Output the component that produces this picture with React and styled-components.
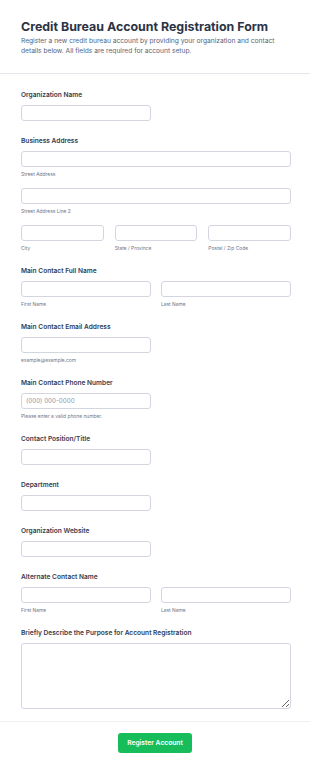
import React from 'react';
import styled, { createGlobalStyle } from 'styled-components';

const GlobalStyle = createGlobalStyle`
  * { box-sizing: border-box; }
  body {
    margin: 0;
    background: #ffffff;
    font-family: Inter, "Noto Sans", "Liberation Sans", sans-serif;
    color: #2c3345;
  }
`;

const Page = styled.div`
  width: 310px;
  background: #fff;
`;

const Header = styled.header`
  padding: 19px 19px 17px 21px;
  border-bottom: 1px solid #e6e7ec;
`;

const Title = styled.h1`
  margin: 0;
  font-size: 12.4px;
  line-height: 16px;
  font-weight: 700;
  color: #2c3345;
  white-space: nowrap;
`;

const Description = styled.p`
  margin: 1px 0 0;
  font-size: 6.65px;
  line-height: 10px;
  color: #57647e;
`;

const Form = styled.form`
  padding: 16px 19px 12px 21px;
  display: flex;
  flex-direction: column;
  gap: 14px;
`;

const Field = styled.div`
  display: flex;
  flex-direction: column;
`;

const Label = styled.label`
  font-size: 6.6px;
  line-height: 10px;
  font-weight: 600;
  color: #343c52;
  margin-bottom: 5px;
`;

const Row = styled.div`
  display: grid;
  grid-template-columns: repeat(${p => p.$cols || 1}, 1fr);
  column-gap: ${p => (p.$cols === 3 ? 11 : 10)}px;
  & + & { margin-top: 10px; }
`;

const Sub = styled.div`
  display: flex;
  flex-direction: column;
  width: ${p => p.$half ? '130px' : 'auto'};
  padding-bottom: ${p => p.$bare ? 1 : 0}px;
`;

const Input = styled.input`
  height: 16px;
  width: 100%;
  border: 1px solid #d3d6e0;
  border-radius: 3px;
  background: #fff;
  padding: 0 4px;
  font-family: inherit;
  font-size: 6.25px;
  color: #2c3345;
  outline: none;
  &::placeholder { color: #8d93a6; }
`;

const TextArea = styled.textarea`
  height: 66px;
  width: 100%;
  border: 1px solid #d3d6e0;
  border-radius: 3px;
  background: #fff;
  padding: 4px 5px;
  font-family: inherit;
  font-size: 6.5px;
  resize: vertical;
  outline: none;
`;

const SubLabel = styled.span`
  margin-top: 4px;
  font-size: 4.9px;
  line-height: 7px;
  color: #6f7689;
`;

const Footer = styled.footer`
  border-top: 1px solid #eef0f4;
  padding: 11px 0 17px;
  display: flex;
  justify-content: center;
`;

const SubmitButton = styled.button`
  height: 20px;
  width: 74px;
  border: none;
  border-radius: 3px;
  background: #18bd5b;
  color: #fff;
  font-family: inherit;
  font-size: 6.7px;
  font-weight: 600;
  padding: 0;
  cursor: pointer;
`;

const Single = ({ label, sub, placeholder }) => (
  <Field>
    <Label>{label}</Label>
    <Sub $half $bare={!sub}>
      <Input placeholder={placeholder} />
      {sub && <SubLabel>{sub}</SubLabel>}
    </Sub>
  </Field>
);

const NameField = ({ label }) => (
  <Field>
    <Label>{label}</Label>
    <Row $cols={2}>
      <Sub>
        <Input />
        <SubLabel>First Name</SubLabel>
      </Sub>
      <Sub>
        <Input />
        <SubLabel>Last Name</SubLabel>
      </Sub>
    </Row>
  </Field>
);

const App = () => (
  <Page>
    <GlobalStyle />
    <Header>
      <Title>Credit Bureau Account Registration Form</Title>
      <Description>
        Register a new credit bureau account by providing your organization and contact details below. All fields are required for account setup.
      </Description>
    </Header>
    <Form onSubmit={e => e.preventDefault()}>
      <Single label="Organization Name" />
      <Field>
        <Label>Business Address</Label>
        <Row>
          <Sub>
            <Input />
            <SubLabel>Street Address</SubLabel>
          </Sub>
        </Row>
        <Row>
          <Sub>
            <Input />
            <SubLabel>Street Address Line 2</SubLabel>
          </Sub>
        </Row>
        <Row $cols={3}>
          <Sub>
            <Input />
            <SubLabel>City</SubLabel>
          </Sub>
          <Sub>
            <Input />
            <SubLabel>State / Province</SubLabel>
          </Sub>
          <Sub>
            <Input />
            <SubLabel>Postal / Zip Code</SubLabel>
          </Sub>
        </Row>
      </Field>
      <NameField label="Main Contact Full Name" />
      <Single label="Main Contact Email Address" sub="example@example.com" />
      <Single label="Main Contact Phone Number" placeholder="(000) 000-0000" sub="Please enter a valid phone number." />
      <Single label="Contact Position/Title" />
      <Single label="Department" />
      <Single label="Organization Website" />
      <NameField label="Alternate Contact Name" />
      <Field>
        <Label>Briefly Describe the Purpose for Account Registration</Label>
        <TextArea />
      </Field>
    </Form>
    <Footer>
      <SubmitButton type="submit">Register Account</SubmitButton>
    </Footer>
  </Page>
);

export default App;
